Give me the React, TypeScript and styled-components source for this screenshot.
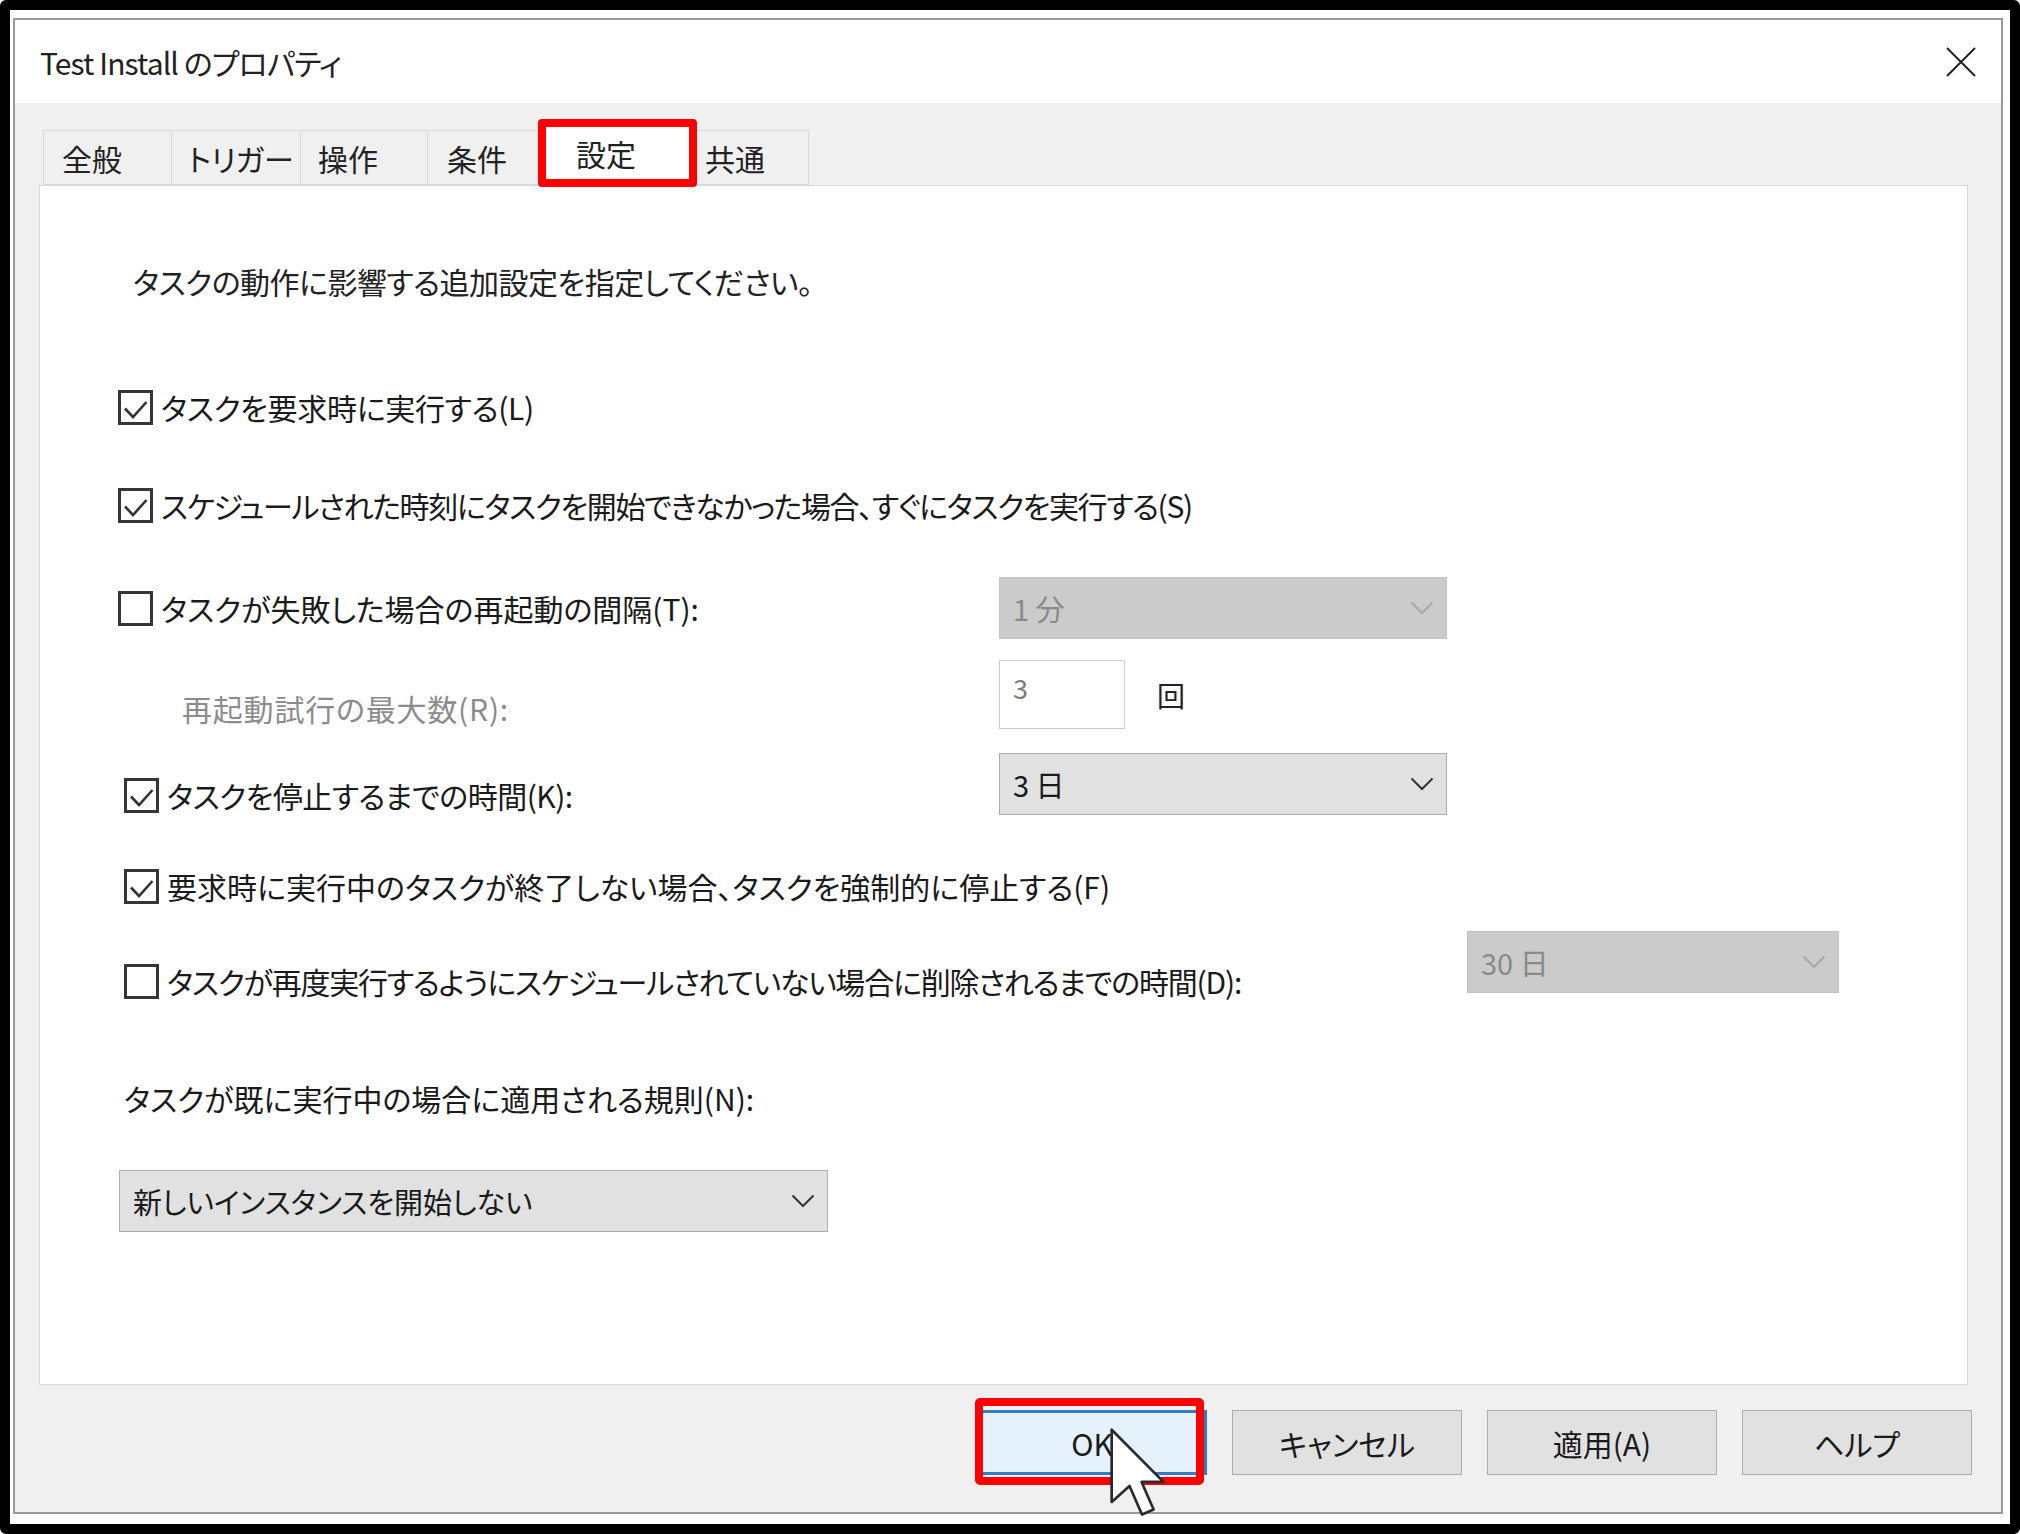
import React from "react";
import styled, { createGlobalStyle } from "styled-components";

const GlobalStyle = createGlobalStyle`
  html, body {
    margin: 0;
    padding: 0;
    background: #fff;
  }
  body {
    font-family: "Noto Sans CJK JP", "Noto Sans", sans-serif;
    font-feature-settings: "palt";
    color: #1a1a1a;
  }
  * {
    box-sizing: border-box;
  }
`;

const tabs = [
  { label: "全般", width: 129, pad: 18 },
  { label: "トリガー", width: 130, pad: 16 },
  { label: "操作", width: 128, pad: 17 },
  { label: "条件", width: 119, pad: 19 },
  { label: "設定", width: 145, pad: 30, active: true },
  { label: "共通", width: 120, pad: 15 },
];

const Check = ({ checked }: { checked: boolean }) => (
  <Box>
    {checked && (
      <svg width="29" height="29" viewBox="0 0 29 29">
        <polyline
          points="4,15.5 12,24 25.5,9"
          fill="none"
          stroke="#333"
          strokeWidth="2.6"
        />
      </svg>
    )}
  </Box>
);

const Chevron = ({ disabled }: { disabled?: boolean }) => (
  <svg width="24" height="14" viewBox="0 0 24 14">
    <polyline
      points="1.5,1.5 12,12 22.5,1.5"
      fill="none"
      stroke={disabled ? "#a8a8a8" : "#333"}
      strokeWidth="2"
    />
  </svg>
);

const App = () => {
  return (
    <>
      <GlobalStyle />
      <Frame>
        <Window>
          <TitleBar>
            <Title>Test Install のプロパティ</Title>
            <svg width="32" height="30" viewBox="0 0 32 30">
              <path d="M2 1 L30 29 M30 1 L2 29" stroke="#222" strokeWidth="2" />
            </svg>
          </TitleBar>
          <Body>
            <TabRow>
              {tabs.map((t) => (
                <Tab key={t.label} $w={t.width} $pad={t.pad} $active={t.active}>
                  {t.label}
                  {t.active && <TabHighlight />}
                </Tab>
              ))}
            </TabRow>
            <Panel>
              <Intro>タスクの動作に影響する追加設定を指定してください。</Intro>

              <Row $mt={84} $h={44}>
                <Lead>
                  <Check checked />
                  <Text $spacing={-0.3}>タスクを要求時に実行する(L)</Text>
                </Lead>
              </Row>

              <Row $mt={54} $h={44}>
                <Lead>
                  <Check checked />
                  <Text $spacing={-1.35}>
                    スケジュールされた時刻にタスクを開始できなかった場合、すぐにタスクを実行する(S)
                  </Text>
                </Lead>
              </Row>

              <Row $mt={50} $h={62}>
                <Lead $width={881}>
                  <Check checked={false} />
                  <Text>タスクが失敗した場合の再起動の間隔(T):</Text>
                </Lead>
                <Select $w={448} $disabled>
                  <span>1 分</span>
                  <Chevron disabled />
                </Select>
              </Row>

              <Row $mt={21} $h={69}>
                <Lead $indent={64} $width={817} $drop={27}>
                  <Text $muted $spacing={0.8}>
                    再起動試行の最大数(R):
                  </Text>
                </Lead>
                <NumberBox>3</NumberBox>
                <Unit>回</Unit>
              </Row>

              <Row $mt={24} $h={62}>
                <Lead $indent={6} $width={875} $drop={22}>
                  <Check checked />
                  <Text $spacing={-0.5}>タスクを停止するまでの時間(K):</Text>
                </Lead>
                <Select $w={448}>
                  <span>3 日</span>
                  <Chevron />
                </Select>
              </Row>

              <Row $mt={49} $h={44}>
                <Lead $indent={6}>
                  <Check checked />
                  <Text>
                    要求時に実行中のタスクが終了しない場合、タスクを強制的に停止する(F)
                  </Text>
                </Lead>
              </Row>

              <Row $mt={23} $h={62}>
                <Lead $indent={6} $width={1343} $drop={38}>
                  <Check checked={false} />
                  <Text $spacing={-1.2}>
                    タスクが再度実行するようにスケジュールされていない場合に削除されるまでの時間(D):
                  </Text>
                </Lead>
                <Select $w={372} $disabled>
                  <span>30 日</span>
                  <Chevron disabled />
                </Select>
              </Row>

              <Row $mt={83} $h={44}>
                <Lead $indent={6}>
                  <Text>タスクが既に実行中の場合に適用される規則(N):</Text>
                </Lead>
              </Row>

              <Row $mt={50} $h={62}>
                <Select $w={709} $indent={1}>
                  <span>新しいインスタンスを開始しない</span>
                  <Chevron />
                </Select>
              </Row>
            </Panel>

            <ButtonRow>
              <Button $primary>
                OK
                <ButtonHighlight />
                <Cursor width="58" height="92" viewBox="-0.6 -0.6 13 20.6">
                  <path
                    d="M0 0 L0 16.2 L4 12.6 L6.8 19 L9.4 17.9 L6.7 11.7 L11.6 11.7 Z"
                    fill="#fff"
                    stroke="#2a2a2a"
                    strokeWidth="0.6"
                    strokeLinejoin="round"
                  />
                </Cursor>
              </Button>
              <Button>キャンセル</Button>
              <Button>適用(A)</Button>
              <Button>ヘルプ</Button>
            </ButtonRow>
          </Body>
        </Window>
      </Frame>
    </>
  );
};

const Frame = styled.div`
  width: 2020px;
  height: 1534px;
  border: 10px solid #000;
  border-radius: 6px;
  padding: 8px 7px 10px 3px;
  background: #fff;
`;

const Window = styled.div`
  height: 100%;
  border: 2px solid #9a9a9a;
  background: #f0f0f0;
  display: flex;
  flex-direction: column;
`;

const TitleBar = styled.div`
  height: 83px;
  flex-shrink: 0;
  background: #fff;
  display: flex;
  align-items: center;
  justify-content: space-between;
  padding: 0 24px 0 25px;
`;

const Title = styled.div`
  font-size: 30px;
  line-height: 40px;
  letter-spacing: -0.9px;
  color: #222;
`;

const Body = styled.div`
  flex: 1;
  min-height: 0;
  display: flex;
  flex-direction: column;
  padding: 23px 33px 37px 24px;
`;

const TabRow = styled.div`
  display: flex;
  align-items: flex-end;
  height: 59px;
  padding-left: 4px;
  position: relative;
  z-index: 1;
`;

const Tab = styled.div<{ $w: number; $pad: number; $active?: boolean }>`
  position: relative;
  width: ${(p) => p.$w}px;
  height: ${(p) => (p.$active ? 60 : 55)}px;
  margin-bottom: ${(p) => (p.$active ? -1 : 0)}px;
  padding: 0 0 ${(p) => (p.$active ? 8 : 0)}px ${(p) => p.$pad}px;
  background: ${(p) => (p.$active ? "#fff" : "#f0f0f0")};
  border: 1px solid #d9d9d9;
  border-bottom: ${(p) => (p.$active ? "none" : "1px solid #d9d9d9")};
  z-index: ${(p) => (p.$active ? 2 : 1)};
  display: flex;
  align-items: center;
  font-size: 30px;
  color: #222;

  & + & {
    margin-left: -1px;
  }
`;

const TabHighlight = styled.div`
  position: absolute;
  top: -8px;
  left: -8px;
  right: -8px;
  bottom: -1px;
  border: 8px solid #ff0000;
  border-radius: 4px;
`;

const Panel = styled.div`
  flex: 1;
  background: #fff;
  border: 1px solid #d9d9d9;
  padding: 75px 0 0 78px;
  display: flex;
  flex-direction: column;
`;

const Intro = styled.div`
  margin-left: 15px;
  font-size: 30px;
  line-height: 40px;
  letter-spacing: -0.5px;
  color: #222;
`;

const Row = styled.div<{ $mt: number; $h: number }>`
  display: flex;
  align-items: center;
  flex-shrink: 0;
  height: ${(p) => p.$h}px;
  margin-top: ${(p) => p.$mt}px;
`;

const Lead = styled.div<{ $indent?: number; $width?: number; $drop?: number }>`
  display: flex;
  align-items: center;
  gap: 8px;
  flex-shrink: 0;
  margin-left: ${(p) => p.$indent ?? 0}px;
  margin-top: ${(p) => p.$drop ?? 0}px;
  width: ${(p) => (p.$width ? `${p.$width}px` : "auto")};
  height: 44px;
`;

const Box = styled.span`
  width: 35px;
  height: 35px;
  flex-shrink: 0;
  border: 3px solid #363636;
  background: #fff;
  display: inline-flex;
`;

const Text = styled.span<{ $muted?: boolean; $spacing?: number }>`
  font-size: 30px;
  line-height: 40px;
  white-space: nowrap;
  letter-spacing: ${(p) => p.$spacing ?? 0}px;
  color: ${(p) => (p.$muted ? "#8c8c8c" : "#1a1a1a")};
`;

const Select = styled.div<{ $w: number; $disabled?: boolean; $indent?: number }>`
  width: ${(p) => p.$w}px;
  height: 62px;
  flex-shrink: 0;
  margin-left: ${(p) => p.$indent ?? 0}px;
  display: flex;
  align-items: center;
  justify-content: space-between;
  padding: 0 12px 0 13px;
  background: ${(p) => (p.$disabled ? "#cbcbcb" : "#e1e1e1")};
  border: 1px solid ${(p) => (p.$disabled ? "#c2c2c2" : "#adadad")};
  font-size: 29px;
  color: ${(p) => (p.$disabled ? "#8a8a8a" : "#1a1a1a")};
`;

const NumberBox = styled.div`
  width: 126px;
  height: 69px;
  flex-shrink: 0;
  border: 1px solid #cccccc;
  background: #fff;
  padding: 13px 0 0 13px;
  font-size: 27px;
  line-height: 28px;
  color: #7c7c7c;
`;

const Unit = styled.span`
  margin-left: 32px;
  font-size: 28px;
  line-height: 40px;
  color: #222;
`;

const ButtonRow = styled.div`
  display: flex;
  justify-content: flex-end;
  gap: 25px;
  margin: 25px -4px 0 0;
`;

const Button = styled.div<{ $primary?: boolean }>`
  position: relative;
  width: 230px;
  height: 65px;
  display: flex;
  align-items: center;
  justify-content: center;
  font-size: 30px;
  color: #1a1a1a;
  background: ${(p) => (p.$primary ? "#e5f1fb" : "#e1e1e1")};
  border: ${(p) => (p.$primary ? "3px solid #2f7dc4" : "1px solid #adadad")};
`;

const ButtonHighlight = styled.div`
  position: absolute;
  top: -15px;
  left: -5px;
  right: 0;
  bottom: -13px;
  border: 8px solid #ff0000;
  border-radius: 5px;
`;

const Cursor = styled.svg`
  position: absolute;
  left: 129px;
  top: 14px;
`;

export default App;
